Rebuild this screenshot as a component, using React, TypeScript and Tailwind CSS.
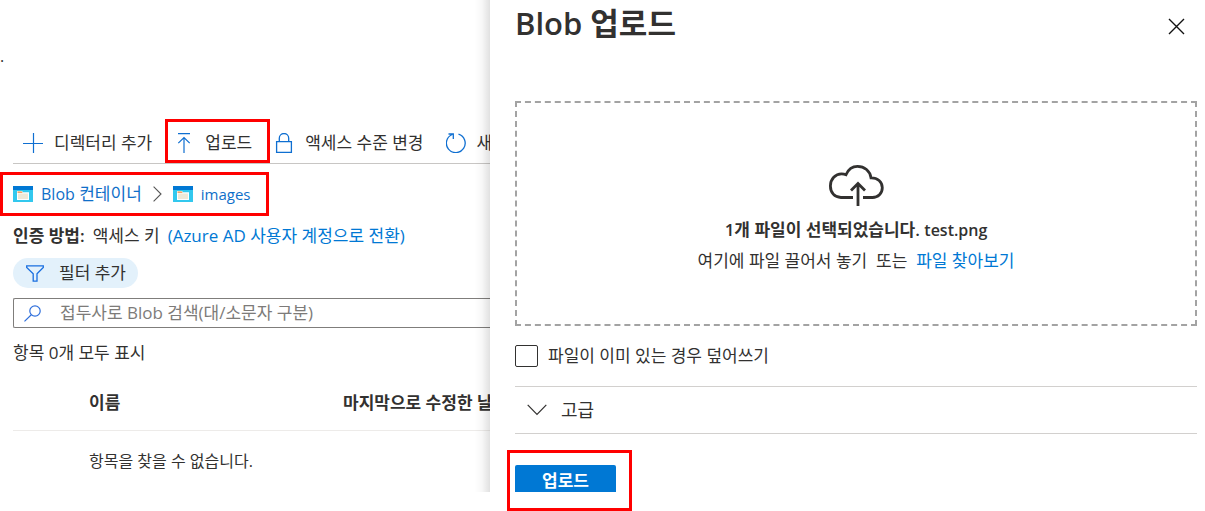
import type { ReactNode } from "react";

function Highlight({ className }: { className: string }) {
  return (
    <span
      aria-hidden="true"
      className={`pointer-events-none absolute z-20 border-[3px] border-[#ff0000] ${className}`}
    />
  );
}

function ToolButton({ icon, label, children }: { icon: ReactNode; label: string; children?: ReactNode }) {
  return (
    <button type="button" className="relative flex shrink-0 items-center gap-[11px] whitespace-nowrap">
      {icon}
      <span>{label}</span>
      {children}
    </button>
  );
}

const iconProps = {
  width: 20,
  height: 20,
  viewBox: "0 0 20 20",
  fill: "none",
  stroke: "#0f6fd1",
  strokeWidth: 1.2,
  "aria-hidden": true,
  className: "shrink-0",
} as const;

function PlusIcon() {
  return (
    <svg {...iconProps}>
      <path d="M10.5 0v20M0 10.5h20" />
    </svg>
  );
}

function UploadIcon() {
  return (
    <svg {...iconProps}>
      <path d="M4 .7h12M10 20V4.5M4.3 10.2 10 4.5l5.7 5.7" />
    </svg>
  );
}

function LockIcon() {
  return (
    <svg {...iconProps} strokeWidth={1.3}>
      <path d="M2.6 8.7h14.8v10.6H2.6zM5.3 8.7V5.2a4.7 4.7 0 0 1 9.4 0v3.5" />
    </svg>
  );
}

function RefreshIcon() {
  return (
    <svg {...iconProps} strokeWidth={1.3}>
      <path d="M12.5 1.2A9.4 9.4 0 1 1 6.2 1.5M2.5 1h4.8v5" />
    </svg>
  );
}

function ContainerIcon() {
  return (
    <svg width="20" height="16" viewBox="0 0 20 16" aria-hidden="true" className="shrink-0">
      <rect width="20" height="16" rx="0.6" fill="#32c8ee" />
      <rect width="20" height="4" fill="#0078d4" />
      <path d="M4 5h5l1 1.2h6V14H4z" fill="#fff" />
      <path d="M4.500 5.400h4.200l1 1.400H4.500z" fill="#e8883a" />
      <path d="M5 7.500h10V13H5z" fill="#efe9d8" />
    </svg>
  );
}

function FilterIcon() {
  return (
    <svg width="18" height="17" viewBox="0 0 18 17" fill="none" stroke="#1a6fe0" strokeWidth="1.3" aria-hidden="true" className="shrink-0">
      <path d="M.7.8h16.6v1.6L11 8.8v7.4H7.2V8.8L.7 2.4z" />
    </svg>
  );
}

function SearchIcon() {
  return (
    <svg width="17" height="17" viewBox="0 0 17 17" fill="none" stroke="#2f6fdb" strokeWidth="1.2" aria-hidden="true" className="shrink-0">
      <circle cx="11" cy="6" r="5.2" />
      <path d="M7.3 9.7.5 16.4" />
    </svg>
  );
}

function CloudUploadIcon() {
  return (
    <svg width="56" height="42" viewBox="0 0 56 42" fill="none" stroke="#323130" strokeWidth="2.8" aria-hidden="true">
      <path d="M25 33.5H13C6.5 33.5 2.400 28.500 2.400 22 2.400 15 7.500 9.800 13.500 9.800c1.800 0 3 .2 4.500.9C20.500 5 24.500 2.400 29.500 2.400c7 0 12.500 4.600 13.500 11.400 6.500-.2 11.300 4 11.300 9.900 0 5.700-4.300 9.800-9.800 9.800H35" />
      <path d="M30 42V20M23 26.500l7-7 7 7" />
    </svg>
  );
}

function BlobList() {
  return (
    <section className="relative min-w-0 self-start overflow-hidden pl-[13px]">
      <p className="-ml-[13px] h-[123px] pt-[46px] text-[16px] leading-5">.</p>

      <div className="flex h-[41px] items-center gap-[22px] border-b border-[#c8c6c4] pl-[10px]">
        <ToolButton icon={<PlusIcon />} label="디렉터리 추가" />
        <ToolButton icon={<UploadIcon />} label="업로드">
          <Highlight className="-top-[12px] -left-[9px] h-[44px] w-[105px]" />
        </ToolButton>
        <ToolButton icon={<LockIcon />} label="액세스 수준 변경" />
        <ToolButton icon={<RefreshIcon />} label="새로 고침" />
      </div>

      <nav aria-label="경로" className="relative mt-2 -ml-[13px] flex h-[44px] w-[269px] items-center pl-[13px] text-[#0f6fc9]">
        <a href="#containers" className="flex items-center gap-2 whitespace-nowrap">
          <ContainerIcon />
          <span>
            <span className="text-[16px]">Blob</span> 컨테이너
          </span>
        </a>
        <svg width="9" height="16" viewBox="0 0 9 16" fill="none" stroke="#555" strokeWidth="1.1" aria-hidden="true" className="mx-[11px] shrink-0">
          <path d="M.6.6 8 8 .6 15.4" />
        </svg>
        <a href="#images" className="flex items-center gap-2 text-[15px]">
          <ContainerIcon />
          <span>images</span>
        </a>
        <Highlight className="inset-0" />
      </nav>

      <p className="mt-2 flex h-6 gap-2 whitespace-nowrap leading-6">
        <strong className="font-semibold">인증 방법:</strong>
        <span>액세스 키</span>
        <a href="#auth" className="text-[#0078d4]">
          (Azure AD 사용자 계정으로 전환)
        </a>
      </p>

      <button type="button" className="mt-[10px] flex h-[30px] w-[125px] items-center gap-[15px] rounded-full bg-[#e3f1fb] pl-[13px] whitespace-nowrap">
        <FilterIcon />
        <span>필터 추가</span>
      </button>

      <label className="mt-[10px] flex h-[30px] items-center gap-[19px] rounded-l-[2px] border border-r-0 border-[#7f7d7b] pl-[10px]">
        <SearchIcon />
        <input
          type="text"
          aria-label="Blob 검색"
          placeholder="접두사로 Blob 검색(대/소문자 구분)"
          className="min-w-0 flex-1 bg-transparent outline-none placeholder:text-[#7d7b79]"
        />
      </label>

      <p className="mt-[13px] h-6 whitespace-nowrap leading-6">항목 0개 모두 표시</p>

      <table className="mt-[11px] w-full table-fixed text-left whitespace-nowrap">
        <thead>
          <tr className="h-[54px] border-b border-[#edebe9]">
            <th className="pl-[76px] font-semibold">이름</th>
            <th className="w-[147px] font-semibold">마지막으로 수정한 날짜</th>
          </tr>
        </thead>
        <tbody>
          <tr className="h-[62px] text-[16px]">
            <td colSpan={2} className="pl-[76px]">
              항목을 찾을 수 없습니다.
            </td>
          </tr>
        </tbody>
      </table>

      <div aria-hidden="true" className="pointer-events-none absolute inset-y-0 right-0 z-10 w-4 bg-linear-to-r from-black/0 via-black/3 to-black/12" />
    </section>
  );
}

function UploadPanel() {
  return (
    <section aria-labelledby="panel-title" className="min-w-0 pr-2 pb-5 pl-[25px]">
      <header className="flex h-[101px] items-start justify-between pr-[12px]">
        <h1 id="panel-title" className="mt-[3px] text-[31px] leading-10 font-semibold whitespace-nowrap">
          Blob 업로드
        </h1>
        <button type="button" aria-label="닫기" className="mt-[18px]">
          <svg width="17" height="17" viewBox="0 0 17 17" stroke="#111" strokeWidth="1.4" aria-hidden="true">
            <path d="M1 1l15 15M16 1 1 16" />
          </svg>
        </button>
      </header>

      <div className="flex h-[225px] flex-col items-center border-2 border-dashed border-[#a3a3a3] pt-[61px] text-center">
        <CloudUploadIcon />
        <p className="mt-[9px] leading-[30px] font-semibold">
          1개 파일이 선택되었습니다. <span className="text-[16px]">test.png</span>
        </p>
        <p className="leading-8">
          여기에 파일 끌어서 놓기&nbsp; 또는&nbsp;{" "}
          <a href="#browse" className="text-[#0078d4]">
            파일 찾아보기
          </a>
        </p>
      </div>

      <label className="flex h-[60px] items-center gap-[10px]">
        <input type="checkbox" className="h-[22px] w-[23px] appearance-none rounded-[2px] border border-[#323130] bg-white" />
        <span>파일이 이미 있는 경우 덮어쓰기</span>
      </label>

      <button type="button" className="flex h-12 w-full items-center gap-[14px] border-y border-[#d2d0ce] pl-3 text-[18px]">
        <svg width="20" height="12" viewBox="0 0 20 12" fill="none" stroke="#323130" strokeWidth="1.2" aria-hidden="true">
          <path d="M.7.9 10 10.5 19.3.9" />
        </svg>
        <span>고급</span>
      </button>

      <div className="relative mt-[31px] w-[101px]">
        <div className="h-[27px] overflow-hidden">
          <button type="button" className="h-8 w-full rounded-[2px] bg-[#0078d4] font-semibold text-white">
            업로드
          </button>
        </div>
        <Highlight className="-top-[15px] -left-2 h-[61px] w-[125px]" />
      </div>
    </section>
  );
}

export default function App() {
  return (
    <main className="grid grid-cols-[490fr_715fr] bg-white font-['Open_Sans','Noto_Sans_CJK_KR',sans-serif] text-[17px] leading-6 text-[#323130]">
      <BlobList />
      <UploadPanel />
    </main>
  );
}
